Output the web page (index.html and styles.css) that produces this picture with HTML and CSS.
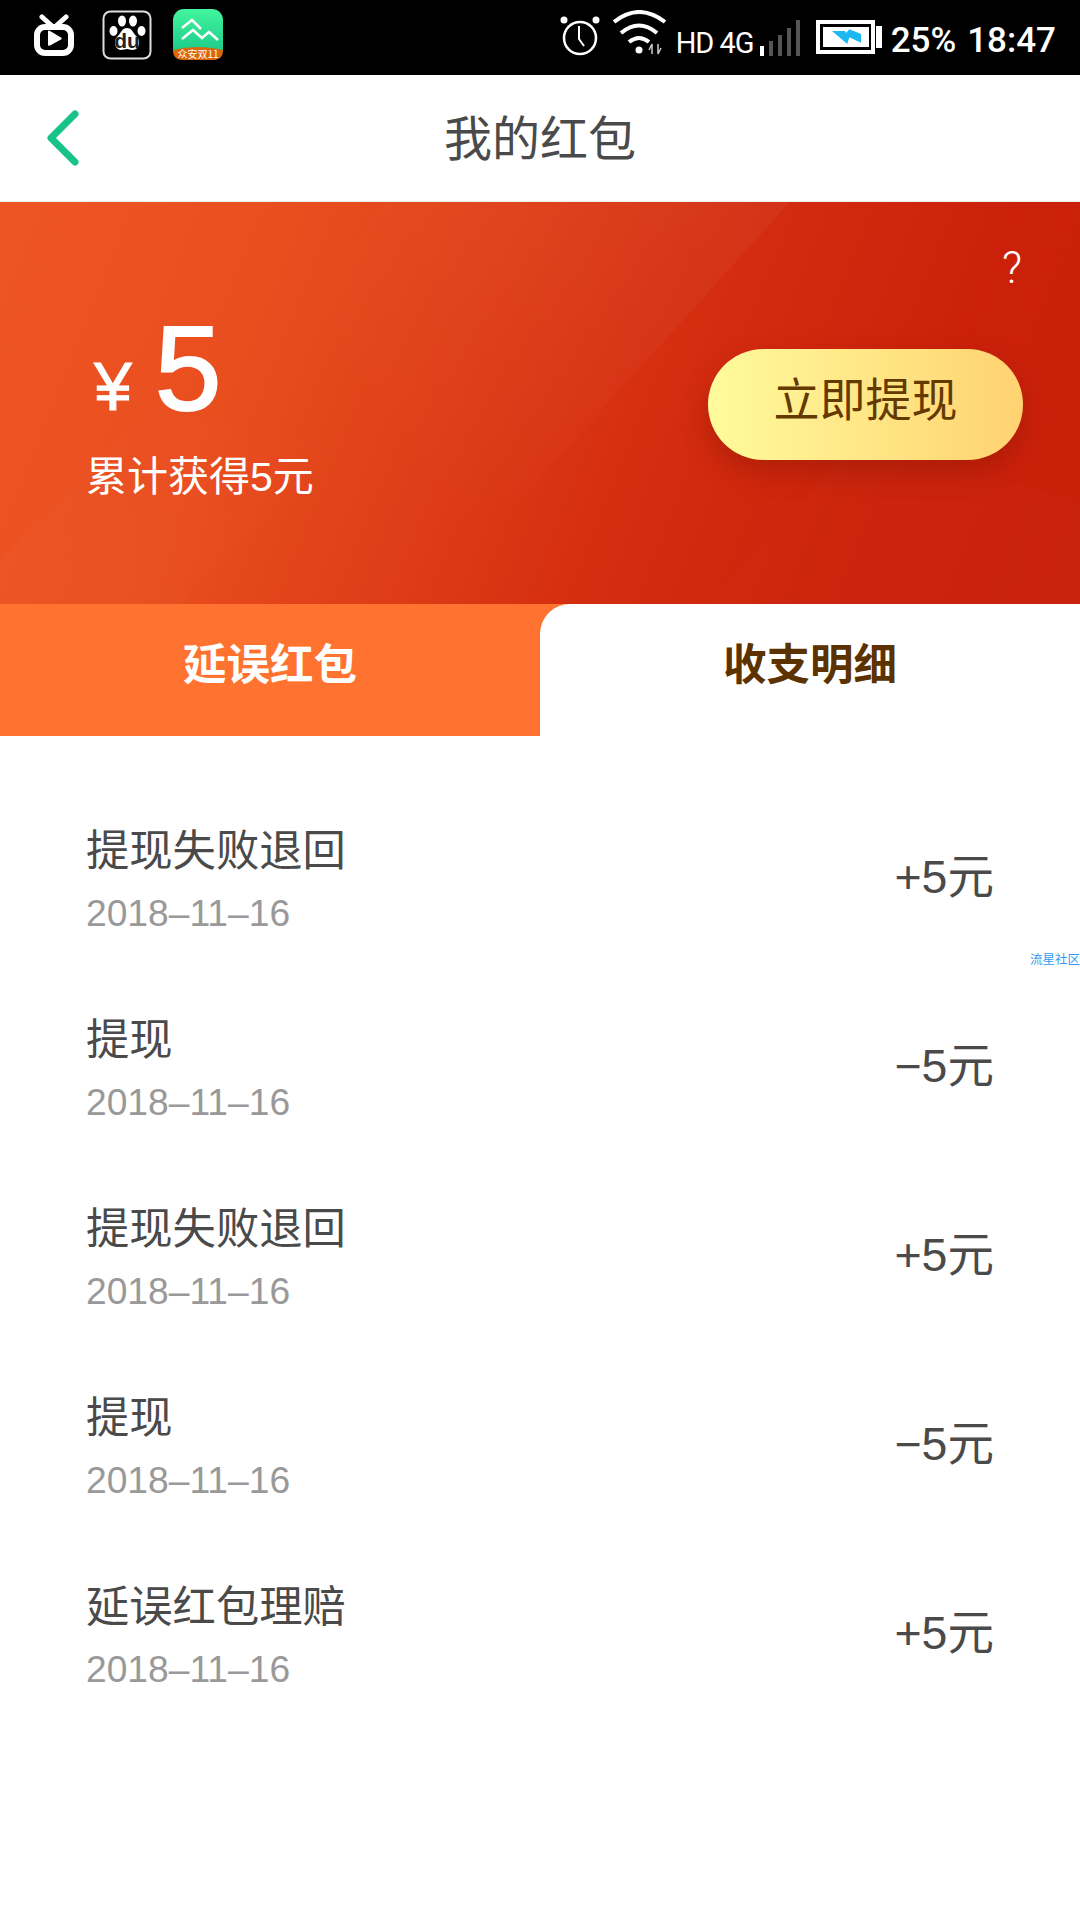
FILE: index.html
```html
<!DOCTYPE html>
<html lang="zh">
<head>
<meta charset="utf-8">
<title>我的红包</title>
<link rel="stylesheet" href="styles.css">
</head>
<body>
<div class="page">
  <header class="status">
    <div class="status-left">
      <svg class="ic-tv" viewBox="0 0 40 42" width="40" height="42"><path d="M8 3l10 9M32 3l-10 9" stroke="#fff" stroke-width="5" stroke-linecap="round" fill="none"/><rect x="3" y="13" width="34" height="26" rx="8" fill="none" stroke="#fff" stroke-width="6"/><path d="M14 17.500v13q0 2 2 1l11-6q1.500-1 0-2l-11-6.500q-2-1-2 .5z" fill="#fff"/></svg>
      <svg class="ic-du" viewBox="0 0 50 50" width="50" height="50"><rect x="1.500" y="1.500" width="47" height="47" rx="7" fill="#000" stroke="#ddd" stroke-width="2"/><g fill="#fff"><ellipse cx="20" cy="11" rx="4" ry="5.500"/><ellipse cx="31" cy="11" rx="4" ry="5.500"/><ellipse cx="11.500" cy="21" rx="4" ry="5"/><ellipse cx="39.500" cy="21" rx="4" ry="5"/><path d="M25 18c5 0 6 5 10 9s2 13-4 13c-3 0-4-1-6-1s-3 1-6 1c-6 0-8-9-4-13s5-9 10-9z"/></g><text class="du" x="25" y="38" text-anchor="middle">du</text></svg>
      <svg class="ic-app" viewBox="0 0 50 52" width="50" height="52"><defs><linearGradient id="appg" x1="0" y1="0" x2="0" y2="1"><stop offset="0" stop-color="#43f49e"/><stop offset="1" stop-color="#14c486"/></linearGradient></defs><rect width="50" height="51" rx="11" fill="url(#appg)"/><path d="M0 41q25-6 50 0v1q0 9-11 9H11Q0 51 0 42z" fill="#dc660a"/><path d="M10 20l10-8 9 9M10 31l11-9 9 8 7-6 9 8" stroke="#fff" stroke-width="2.500" fill="none" transform="translate(-1 -1)"/><text class="app-label" x="25" y="49" text-anchor="middle">众安双11</text></svg>
    </div>
    <div class="status-right">
      <svg class="ic-alarm" viewBox="0 0 40 40" width="40" height="40"><circle cx="20" cy="22" r="16" fill="none" stroke="#fff" stroke-width="2.500"/><path d="M19 10v13l5 7" stroke="#fff" stroke-width="2" fill="none"/><circle cx="4" cy="4" r="3.500" fill="#fff"/><circle cx="36" cy="4" r="3.500" fill="#fff"/></svg>
      <svg class="ic-wifi" viewBox="0 0 53 45" width="53" height="45"><g fill="none" stroke="#fff" stroke-width="4"><path d="M1 12q25-20 51 0"/><path d="M8 23q18-15 36 0"/><path d="M16 32q10-8 20 0"/></g><circle cx="26" cy="40" r="3.500" fill="#fff"/><path d="M39 44v-10l-3 6M45 34v10l3-6" stroke="#ccc" stroke-width="1.500" fill="none"/></svg>
      <span class="net">HD 4G</span>
      <div class="signal"><i class="on s1"></i><i class="s2"></i><i class="s3"></i><i class="s4"></i><i class="s5"></i></div>
      <svg class="ic-batt" viewBox="0 0 66 34" width="66" height="34"><rect x="2" y="2" width="55" height="30" fill="#000" stroke="#fff" stroke-width="4"/><rect x="7" y="7" width="46" height="20" fill="#fff"/><rect x="60" y="6" width="6" height="22" fill="#fff"/><path d="M16 11H29l1 2 3.300-3.700L45 14v8.700L33.300 17.300 31.300 24z" fill="#1bb8f2"/></svg>
      <span class="clock">25%</span>
      <span class="clock time">18:47</span>
    </div>
  </header>

  <nav class="nav">
    <a class="back" href="#"><svg viewBox="0 0 36 60" width="36" height="60"><path d="M30 6L6 30l24 24" fill="none" stroke="#17c38b" stroke-width="7" stroke-linecap="round" stroke-linejoin="round"/></svg></a>
    <h1 class="nav-title">我的红包</h1>
  </nav>

  <section class="hero">
    <svg class="hero-sheen" viewBox="0 0 1080 402" preserveAspectRatio="none">
      <defs>
        <linearGradient id="fadeA" x1="0" y1="0.700" x2="1" y2="0.300"><stop offset="0.250" stop-color="#fff" stop-opacity="0"/><stop offset="1" stop-color="#fff" stop-opacity=".04"/></linearGradient>
        <linearGradient id="fadeB" x1="0" y1="1" x2="1" y2="0"><stop offset="0" stop-color="#fff" stop-opacity=".02"/><stop offset="1" stop-color="#fff" stop-opacity="0"/></linearGradient>
      </defs>
      <polygon points="380,0 790,0 500,320 200,320" fill="url(#fadeA)"/>
      <polygon points="0,359 151,204 334,246 179,402 0,402" fill="url(#fadeB)"/>
      <polygon points="710,402 860,235 1080,300 1080,402" fill="#fff" opacity=".012"/>
    </svg>
    <div class="help">?</div>
    <div class="hero-main">
      <div class="balance">
        <div class="amount"><span class="yen">¥</span><span class="big">5</span></div>
        <div class="total">累计获得5元</div>
      </div>
      <button class="cash">立即提现</button>
    </div>
  </section>

  <div class="tabs">
    <div class="tab tab-off"><span>延误红包</span></div>
    <div class="tab tab-on"><span>收支明细</span></div>
  </div>

  <ul class="list">
    <li class="row"><div><div class="r-title">提现失败退回</div><div class="r-date">2018–11–16</div></div><div class="r-amt">+5元</div></li>
    <li class="row"><div><div class="r-title">提现</div><div class="r-date">2018–11–16</div></div><div class="r-amt">−5元</div></li>
    <li class="row"><div><div class="r-title">提现失败退回</div><div class="r-date">2018–11–16</div></div><div class="r-amt">+5元</div></li>
    <li class="row"><div><div class="r-title">提现</div><div class="r-date">2018–11–16</div></div><div class="r-amt">−5元</div></li>
    <li class="row"><div><div class="r-title">延误红包理赔</div><div class="r-date">2018–11–16</div></div><div class="r-amt">+5元</div></li>
  </ul>
  <div class="mark">流星社区</div>
</div>
</body>
</html>
```
FILE: styles.css
```css
* { box-sizing: border-box; }
html, body { margin: 0; padding: 0; background: #fff; }
body { font-family: "Liberation Sans", "Noto Sans CJK SC", sans-serif; color: #444; }
.page { position: relative; width: 1080px; height: 1920px; overflow: hidden; background: #fff; }

.status { height: 75px; background: #000; display: flex; justify-content: space-between; align-items: center; padding: 0 24px 0 34px; }
.status-left { display: flex; align-items: center; gap: 28px; margin-top: -5px; }
.status-left svg { display: block; }
.ic-app { margin-left: -7px; }
.du { font: bold 21px "Liberation Sans", sans-serif; fill: #222; }
.app-label { font: 10px "Noto Sans CJK SC", sans-serif; fill: #fff; }
.status-right { display: flex; align-items: flex-end; height: 56px; margin-top: -16px; color: #fff; font-family: Roboto, sans-serif; }
.status-right svg { display: block; }
.ic-alarm { margin-right: 13px; margin-bottom: 2px; }
.ic-wifi { margin-right: 10px; margin-bottom: 3px; }
.net { font-size: 29px; letter-spacing: -1px; line-height: 30px; width: 84px; white-space: nowrap; }
.signal { display: flex; align-items: flex-end; gap: 5px; width: 56px; height: 38px; margin-bottom: 2px; }
.signal i { display: block; width: 4px; flex: none; background: #555; }
.signal .on { background: #fff; }
.s1 { height: 10px; }
.s2 { height: 15px; }
.s3 { height: 21px; }
.s4 { height: 28px; }
.s5 { height: 36px; }
.ic-batt { margin-bottom: 4px; }
.clock { font-size: 35px; font-weight: 500; line-height: 34px; margin-left: 9px; }
.time { margin-left: 11px; }

.nav { height: 127px; border-bottom: 1px solid #eee; display: flex; align-items: center; justify-content: center; position: relative; }
.back { position: absolute; left: 45px; top: 33px; display: block; }
.back svg { display: block; }
.nav-title { margin: 4px 0 0; font-size: 48px; font-weight: 400; color: #4a4a4a; line-height: 1; }

.hero { position: relative; height: 402px; padding: 48px 57px 0 86px; background: linear-gradient(112deg, #ee5524 0%, #e94e1f 24%, #df3f18 42%, #d42d0f 60%, #cb210b 82%, #c9200a 100%); color: #fff; }
.hero-sheen { position: absolute; inset: 0; width: 100%; height: 100%; }
.help { position: relative; text-align: right; font-family: Roboto, sans-serif; font-weight: 300; font-size: 44px; line-height: 36px; padding-right: 1px; height: 36px; }
.hero-main { position: relative; display: flex; justify-content: space-between; align-items: flex-start; margin-top: 32px; }
.amount { display: flex; align-items: baseline; height: 118px; margin-left: 8px; }
.yen { font-size: 68px; line-height: 100px; margin-right: 23px; -webkit-text-stroke: 1px #fff; }
.big { font-size: 120px; line-height: 100px; -webkit-text-stroke: 2px #fff; }
.total { font-size: 41px; line-height: 48px; margin-top: 17px; }
.cash { width: 315px; height: 111px; margin-top: 31px; border: 0; border-radius: 56px; padding: 0 0 17px; background: linear-gradient(90deg, #fffb9c 0%, #ffd271 100%); box-shadow: 0 12px 26px rgba(120, 20, 0, .35); color: #653a00; font: 46px "Liberation Sans", "Noto Sans CJK SC", sans-serif; }

.tabs { display: flex; height: 132px; background: #ff7230; }
.tab { flex: 1; display: flex; justify-content: center; font-size: 43.500px; font-weight: 700; padding-top: 33px; line-height: 56px; }
.tab-off { color: #fff; }
.tab-on { background: #fff; color: #5b3200; border-top-left-radius: 30px; }

.list { list-style: none; margin: 0; padding: 85px 86px 0 86px; }
.row { height: 189px; display: flex; justify-content: space-between; align-items: flex-start; }
.r-title { font-size: 43.300px; line-height: 60px; color: #4a4a4a; }
.r-date { font-size: 37.200px; line-height: 44px; color: #999; margin-top: 10px; }
.r-amt { font-size: 46.500px; line-height: 56px; color: #4a4a4a; margin-top: 28px; }
.mark { position: absolute; right: 0; top: 952px; font-size: 12.500px; line-height: 16px; color: #2f9bf0; }
```
